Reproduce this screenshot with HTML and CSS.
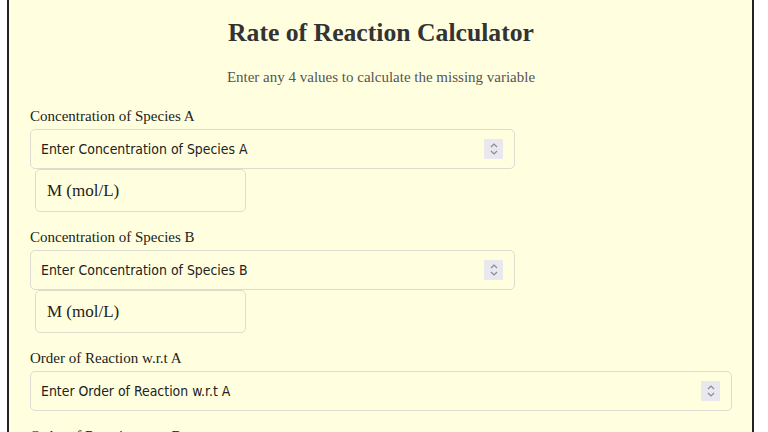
FILE: index.html
```html
<!DOCTYPE html>
<html lang="en">
<head>
    <meta charset="UTF-8">
    <meta name="viewport" content="width=device-width, initial-scale=1.0">
    <title>Rate of Reaction Calculator</title>
    <link rel="stylesheet" href="styles.css">
</head>
<body>
    <div class="calculator">
        <h1>Rate of Reaction Calculator</h1>
        <p class="subtitle">Enter any 4 values to calculate the missing variable</p>

        <div class="field">
            <label for="conc-a">Concentration of Species A</label>
            <div class="input-wrap short">
                <input type="text" id="conc-a" placeholder="Enter Concentration of Species A">
                <span class="spinner"><svg width="10" height="14" viewBox="0 0 10 14"><path d="M2 5 L5 2 L8 5 M2 9 L5 12 L8 9" fill="none" stroke="#8a8a96" stroke-width="1.2"/></svg></span>
            </div>
            <select class="unit"><option>M (mol/L)</option></select>
        </div>

        <div class="field">
            <label for="conc-b">Concentration of Species B</label>
            <div class="input-wrap short">
                <input type="text" id="conc-b" placeholder="Enter Concentration of Species B">
                <span class="spinner"><svg width="10" height="14" viewBox="0 0 10 14"><path d="M2 5 L5 2 L8 5 M2 9 L5 12 L8 9" fill="none" stroke="#8a8a96" stroke-width="1.2"/></svg></span>
            </div>
            <select class="unit"><option>M (mol/L)</option></select>
        </div>

        <div class="field">
            <label for="order-a">Order of Reaction w.r.t A</label>
            <div class="input-wrap">
                <input type="text" id="order-a" placeholder="Enter Order of Reaction w.r.t A">
                <span class="spinner"><svg width="10" height="14" viewBox="0 0 10 14"><path d="M2 5 L5 2 L8 5 M2 9 L5 12 L8 9" fill="none" stroke="#8a8a96" stroke-width="1.2"/></svg></span>
            </div>
        </div>

        <div class="field">
            <label for="order-b">Order of Reaction w.r.t B</label>
            <div class="input-wrap">
                <input type="text" id="order-b" placeholder="Enter Order of Reaction w.r.t B">
                <span class="spinner"><svg width="10" height="14" viewBox="0 0 10 14"><path d="M2 5 L5 2 L8 5 M2 9 L5 12 L8 9" fill="none" stroke="#8a8a96" stroke-width="1.2"/></svg></span>
            </div>
        </div>
    </div>
</body>
</html>
```
FILE: styles.css
```css
:root {
    --bg-color: #ffffdf;
    --border-color: #dcdcd0;
    --text-color: #333;
}

body {
    margin: 0;
    padding: 0;
    background: white;
    font-family: "Liberation Serif", "Times New Roman", serif;
    color: var(--text-color);
}

.calculator {
    width: 702px;
    margin-left: 7px;
    padding: 16px 20px 40px 21px;
    background-color: var(--bg-color);
    border-left: 2px solid #222;
    border-right: 2px solid #222;
}

.calculator h1 {
    margin: 0;
    text-align: center;
    font-size: 25.7px;
    line-height: 34px;
    font-weight: bold;
    color: #333;
}

.subtitle {
    margin: 18px 0 21px;
    text-align: center;
    font-size: 15px;
    line-height: 18px;
    color: #555;
}

.field {
    margin-bottom: 16px;
}

.field label {
    display: block;
    font-size: 15px;
    line-height: 18px;
    color: #222;
    margin-bottom: 4px;
}

.input-wrap {
    position: relative;
}

.input-wrap.short {
    width: 485px;
}

.input-wrap input {
    box-sizing: border-box;
    display: block;
    width: 100%;
    height: 40px;
    padding: 0 40px 0 10px;
    border: 1px solid var(--border-color);
    border-radius: 5px;
    background-color: var(--bg-color);
    font-family: "DejaVu Sans", Verdana, sans-serif;
    font-stretch: semi-condensed;
    font-size: 13.9px;
    color: #222;
    outline: none;
}

.input-wrap input::placeholder {
    color: #222;
}

.spinner {
    position: absolute;
    right: 12px;
    top: 10px;
    width: 19px;
    height: 20px;
    background-color: #e8e8ee;
    display: flex;
    align-items: center;
    justify-content: center;
}

.unit {
    box-sizing: border-box;
    display: block;
    width: 211px;
    height: 43px;
    margin: 0 0 0 5px;
    padding: 0 11px;
    appearance: none;
    border: 1px solid var(--border-color);
    border-radius: 5px;
    background-color: var(--bg-color);
    font-family: "Liberation Serif", "Times New Roman", serif;
    font-size: 17px;
    color: #222;
}
```
